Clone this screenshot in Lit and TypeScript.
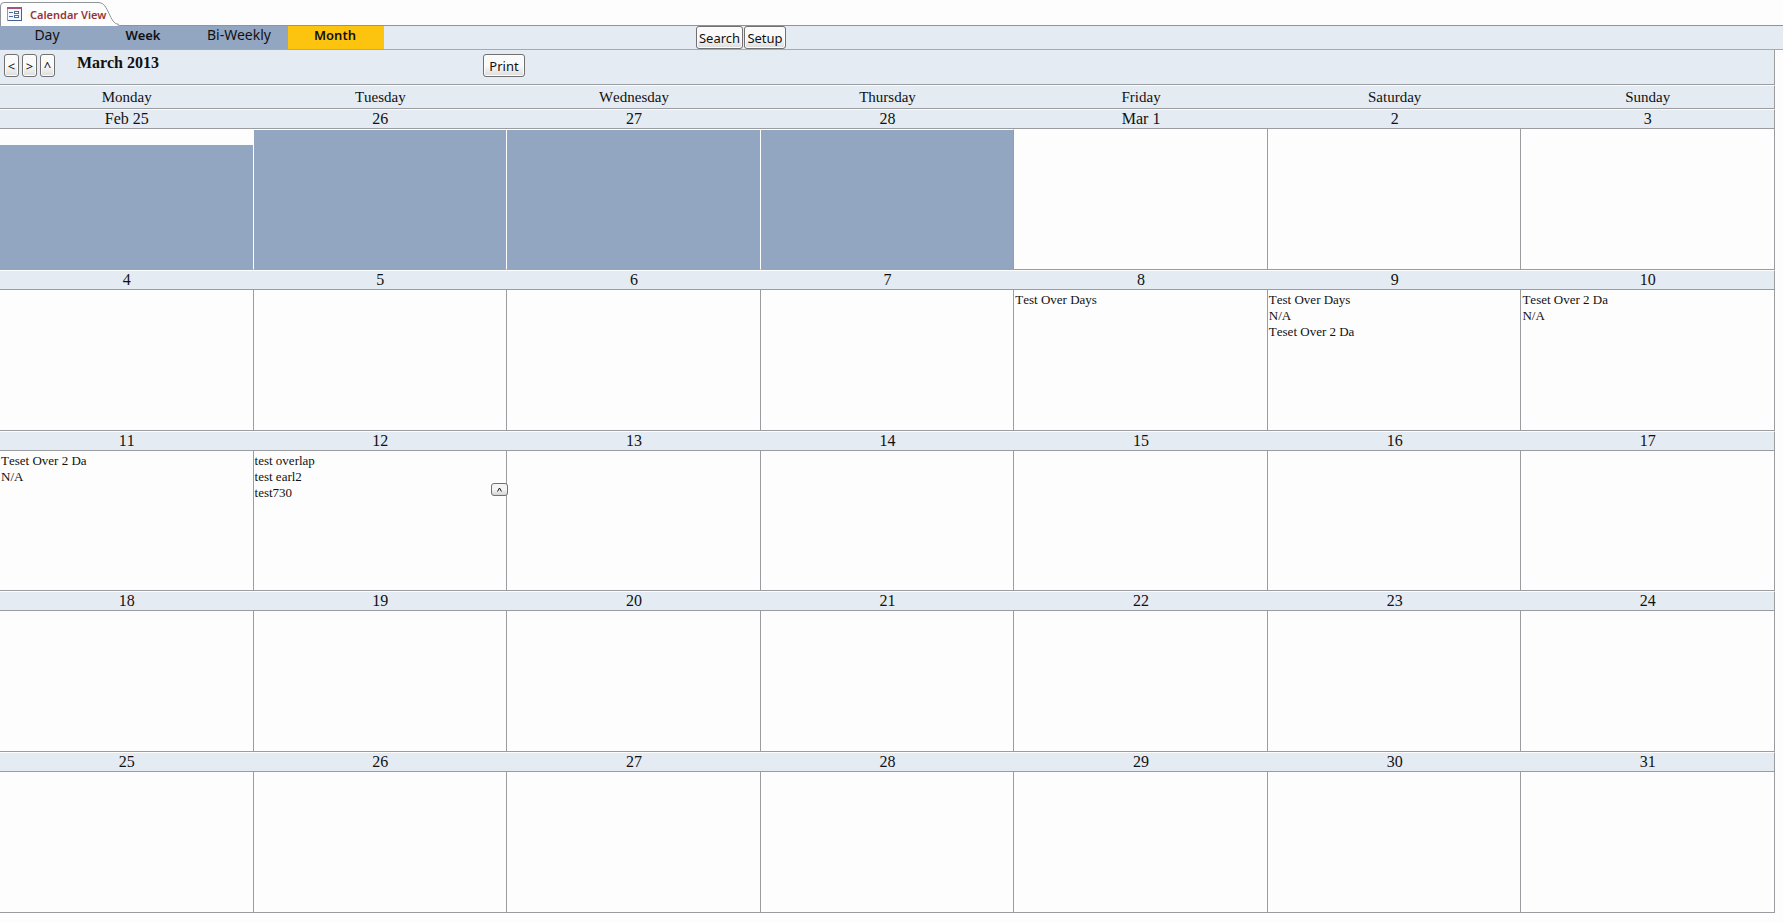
import { LitElement, html, css, svg, nothing } from "lit";
import { customElement, property, state } from "lit/decorators.js";
import { classMap } from "lit/directives/class-map.js";

interface Day {
  label: string;
  entries?: string[];
  outside?: boolean;
  lead?: boolean;
  expandable?: boolean;
}

const WEEKDAYS = ["Monday", "Tuesday", "Wednesday", "Thursday", "Friday", "Saturday", "Sunday"];

const ENTRIES: Record<number, string[]> = {
  8: ["Test Over Days"],
  9: ["Test Over Days", "N/A", "Teset Over 2 Da"],
  10: ["Teset Over 2 Da", "N/A"],
  11: ["Teset Over 2 Da", "N/A"],
  12: ["test overlap", "test earl2", "test730"],
};

const LEADING: Day[] = [
  { label: "Feb 25", outside: true, lead: true },
  { label: "26", outside: true },
  { label: "27", outside: true },
  { label: "28", outside: true },
];

const MONTH: Day[] = Array.from({ length: 31 }, (_, i) => ({
  label: i === 0 ? "Mar 1" : String(i + 1),
  entries: ENTRIES[i + 1],
  expandable: i + 1 === 12,
}));

const DAYS = [...LEADING, ...MONTH];
const WEEKS = Array.from({ length: 5 }, (_, i) => DAYS.slice(i * 7, i * 7 + 7));

@customElement("month-grid")
export class MonthGrid extends LitElement {
  @property({ attribute: false }) weeks: Day[][] = [];

  static styles = css`
    :host {
      display: flex;
      flex: 1;
      min-height: 0;
      font-family: "Liberation Serif", serif;
      font-kerning: none;
    }
    .grid {
      flex: 1;
      display: grid;
      grid-template-columns: repeat(7, minmax(0, 1fr));
      grid-template-rows: 24px repeat(5, 20px minmax(80px, 1fr));
    }
    .group,
    .row {
      display: contents;
    }
    .head,
    .date {
      padding: 0;
      font-weight: 400;
      text-align: center;
      color: #111;
      background: #e4ebf3;
      border-top: 1px solid #fdfdfd;
      border-bottom: 1px solid #9a9ca0;
    }
    .head {
      font-size: 15px;
      line-height: 22px;
    }
    .date {
      font-size: 16px;
      line-height: 18px;
    }
    .head:last-child,
    .date:last-child {
      border-right: 1px solid #9a9ca0;
    }
    .cell {
      position: relative;
      padding: 2px 0 0 1px;
      font-size: 13px;
      line-height: 16px;
      color: #111;
      border-right: 1px solid #9a9ca0;
      border-bottom: 1px solid #9a9ca0;
    }
    .outside {
      padding-top: 0;
      border-right-color: #fdfdfd;
      border-bottom-color: #92a6c2;
      border-top: 1px solid #fdfdfd;
      background: #92a6c2;
    }
    .lead {
      border-top-width: 16px;
    }
    .last {
      border-right-color: #9a9ca0;
    }
    .entries {
      margin: 0;
      padding: 0;
      list-style: none;
    }
    .expand {
      position: absolute;
      top: 32px;
      right: -2px;
      z-index: 1;
      box-sizing: border-box;
      width: 17px;
      height: 13px;
      padding: 0;
      display: grid;
      place-items: center;
      border: 1px solid #707070;
      border-radius: 3px;
      background: linear-gradient(#f4f4f4 50%, #d4d4d4);
      color: #111;
    }
  `;

  private cell(day: Day, i: number, week: Day[]) {
    const classes = {
      cell: true,
      outside: !!day.outside,
      lead: !!day.lead,
      last: !!day.outside && !week[i + 1]?.outside,
    };
    return html`<td class=${classMap(classes)}>
      ${day.entries
        ? html`<ul class="entries">${day.entries.map((e) => html`<li>${e}</li>`)}</ul>`
        : nothing}
      ${day.expandable
        ? html`<button class="expand" aria-label="Expand day">
            <svg width="7" height="5" viewBox="0 0 7 5" fill="none" stroke="currentColor">
              <path d="M1.5 4.5 3.5 1l2 3.5" />
            </svg>
          </button>`
        : nothing}
    </td>`;
  }

  render() {
    return html`<table class="grid">
      <thead class="group">
        <tr class="row">${WEEKDAYS.map((d) => html`<th class="head" scope="col">${d}</th>`)}</tr>
      </thead>
      <tbody class="group">
        ${this.weeks.map(
          (week) => html`
            <tr class="row">${week.map((d) => html`<th class="date">${d.label}</th>`)}</tr>
            <tr class="row">${week.map((d, i) => this.cell(d, i, week))}</tr>
          `,
        )}
      </tbody>
    </table>`;
  }
}

const formIcon = svg`
  <rect x="0.5" y="0.5" width="14" height="13" fill="#f3f6fb" stroke="#8d9bb5" />
  <path d="M0 1h15" stroke="#a2557a" stroke-width="2" />
  <path d="M14.5 2v12M1 13.5h14" stroke="#46608c" />
  <path d="M2 5.5h4M2 9.5h4" stroke="#4a6ca5" />
  <rect x="7.5" y="4.5" width="4" height="2" fill="#fff" stroke="#4a6ca5" />
  <rect x="7.5" y="8.5" width="4" height="2" fill="#fff" stroke="#4a6ca5" />`;

@customElement("app-root")
export class AppRoot extends LitElement {
  @state() private view = "Month";

  static styles = css`
    :host {
      display: flex;
      flex-direction: column;
      box-sizing: border-box;
      height: 100vh;
      min-height: 600px;
      padding-bottom: 10px;
      background: #fdfdfd;
      font-family: "Noto Sans", sans-serif;
      font-size: 13px;
      color: #111;
    }
    .tabs {
      display: flex;
      height: 25px;
      border-bottom: 1px solid #8f939a;
    }
    .tab {
      position: relative;
      display: flex;
      align-items: center;
      gap: 8px;
      height: 26px;
      width: 120px;
      box-sizing: border-box;
      padding: 2px 0 0 7px;
      color: #963634;
      font-size: 11px;
      font-weight: 600;
      text-decoration: none;
      white-space: nowrap;
    }
    .outline {
      position: absolute;
      inset: 0;
    }
    .icon,
    .label {
      position: relative;
    }
    .views {
      display: flex;
      height: 23px;
      background: #e4ebf3;
      border-bottom: 1px solid #a5a9b0;
    }
    .view {
      width: 96px;
      padding: 0 2px 5px 0;
      border: 0;
      background: #92a6c2;
      color: #111;
      font: inherit;
      font-size: 14px;
      line-height: 18px;
    }
    .strong {
      font-size: 13px;
      font-weight: 600;
    }
    .active {
      background: #fdc40f;
    }
    .tools {
      display: flex;
      gap: 1px;
      margin-left: 312px;
    }
    .push {
      box-sizing: border-box;
      height: 23px;
      padding: 0;
      border: 1px solid #707070;
      border-radius: 3px;
      background: linear-gradient(#fafafa 50%, #dcdcdc);
      box-shadow: inset 0 0 0 1px #fcfcfc;
      color: #111;
      font: inherit;
      line-height: 18px;
    }
    .wide {
      width: 47px;
    }
    .mid {
      width: 42px;
    }
    .slim {
      width: 15px;
    }
    .sheet {
      flex: 1;
      min-height: 0;
      display: flex;
      flex-direction: column;
      margin-right: 8px;
    }
    .bar {
      display: flex;
      align-items: flex-start;
      height: 34px;
      padding: 4px 0 0 4px;
      box-sizing: border-box;
      height: 35px;
      background: #e4ebf3;
      border-right: 1px solid #9a9ca0;
      border-bottom: 1px solid #9a9ca0;
    }
    .nav {
      display: flex;
      gap: 3px;
    }
    .title {
      width: 406px;
      margin: 0 0 0 22px;
      font: 700 16px/18px "Liberation Serif", serif;
    }
  `;

  private viewTab(name: string, strong: boolean) {
    const classes = { view: true, strong, active: this.view === name };
    return html`<button class=${classMap(classes)} @click=${() => (this.view = name)}>${name}</button>`;
  }

  render() {
    return html`
      <nav class="tabs">
        <a class="tab" href="#calendar">
          <svg class="outline" width="120" height="26" viewBox="0 0 120 26">
            <path d="M0.5 26V6Q0.5 2.5 4 2.5H99C109 2.5 109 25.5 119 25.5V26Z" fill="#fdfdfd" />
            <path d="M0.5 26V6Q0.5 2.5 4 2.5H99C109 2.5 109 24.5 119 24.5" fill="none" stroke="#8f939a" />
          </svg>
          <svg class="icon" width="15" height="14" viewBox="0 0 15 14">${formIcon}</svg>
          <span class="label">Calendar View</span>
        </a>
      </nav>
      <div class="views">
        ${this.viewTab("Day", false)} ${this.viewTab("Week", true)}
        ${this.viewTab("Bi-Weekly", false)} ${this.viewTab("Month", true)}
        <div class="tools">
          <button class="push wide">Search</button>
          <button class="push mid">Setup</button>
        </div>
      </div>
      <main class="sheet">
        <header class="bar">
          <div class="nav">
            <button class="push slim" aria-label="Previous month">&lt;</button>
            <button class="push slim" aria-label="Next month">&gt;</button>
            <button class="push slim" aria-label="Up">^</button>
          </div>
          <h1 class="title">March 2013</h1>
          <button class="push mid">Print</button>
        </header>
        <month-grid .weeks=${WEEKS}></month-grid>
      </main>
    `;
  }
}
